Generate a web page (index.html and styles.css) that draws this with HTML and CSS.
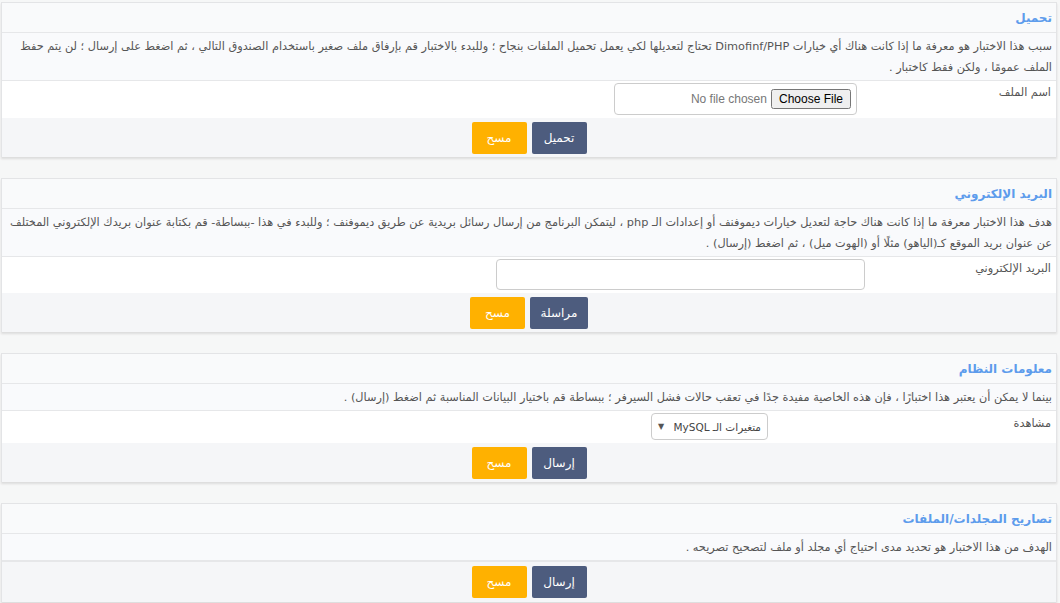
FILE: index.html
```html
<!DOCTYPE html>
<html lang="ar" dir="rtl">
    <head>
        <meta charset="utf-8">
        <title>اختبارات النظام</title>
        <link rel="stylesheet" href="styles.css">
    </head>

    <body>
        <div id="tests">
            <form class="panel">
                <div class="panel-title">تحميل</div>
                <div class="panel-desc">سبب هذا الاختبار هو معرفة ما إذا كانت هناك أي خيارات Dimofinf/PHP تحتاج لتعديلها لكي يعمل تحميل الملفات بنجاح ؛ وللبدء بالاختبار قم بإرفاق ملف صغير باستخدام الصندوق التالي ، ثم اضغط على إرسال ؛ لن يتم حفظ الملف عمومًا ، ولكن فقط كاختبار .</div>
                <div class="panel-row row-file">
                    <label class="row-label">اسم الملف</label>
                    <div class="file-box"><input type="file"></div>
                </div>
                <div class="panel-footer">
                    <button type="button" class="btn btn-primary">تحميل</button
                    ><button type="reset" class="btn btn-warn">مسح</button>
                </div>
            </form>

            <form class="panel">
                <div class="panel-title">البريد الإلكتروني</div>
                <div class="panel-desc">هدف هذا الاختبار معرفة ما إذا كانت هناك حاجة لتعديل خيارات ديموفنف أو إعدادات الـ php ، ليتمكن البرنامج من إرسال رسائل بريدية عن طريق ديموفنف ؛ وللبدء في هذا -ببساطة- قم بكتابة عنوان بريدك الإلكتروني المختلف عن عنوان بريد الموقع كـ(الياهو) مثلًا أو (الهوت ميل) ، ثم اضغط (إرسال) .</div>
                <div class="panel-row row-email">
                    <label class="row-label">البريد الإلكتروني</label>
                    <input type="text" class="text-input">
                </div>
                <div class="panel-footer">
                    <button type="button" class="btn btn-primary btn-wide">مراسلة</button
                    ><button type="reset" class="btn btn-warn">مسح</button>
                </div>
            </form>

            <form class="panel">
                <div class="panel-title">معلومات النظام</div>
                <div class="panel-desc">بينما لا يمكن أن يعتبر هذا اختبارًا ، فإن هذه الخاصية مفيدة جدًا في تعقب حالات فشل السيرفر ؛ ببساطة قم باختيار البيانات المناسبة ثم اضغط (إرسال) .</div>
                <div class="panel-row row-select">
                    <label class="row-label">مشاهدة</label>
                    <div class="select-box">
                        <span>متغيرات الـ MySQL</span>
                        <span class="caret">▼</span>
                    </div>
                </div>
                <div class="panel-footer">
                    <button type="button" class="btn btn-primary">إرسال</button
                    ><button type="reset" class="btn btn-warn">مسح</button>
                </div>
            </form>

            <form class="panel">
                <div class="panel-title">تصاريح المجلدات/الملفات</div>
                <div class="panel-desc">الهدف من هذا الاختبار هو تحديد مدى احتياج أي مجلد أو ملف لتصحيح تصريحه .</div>
                <div class="panel-footer footer-tall">
                    <button type="button" class="btn btn-primary">إرسال</button
                    ><button type="reset" class="btn btn-warn">مسح</button>
                </div>
            </form>
        </div>
    </body>
</html>
```

FILE: styles.css
```css
html, body {
    margin: 0;
    padding: 0;
    background-color: #f6f7f7;
}

body {
    font-family: "DejaVu Sans", sans-serif;
    font-size: 11.3px;
    color: #555;
}

#tests {
    padding-top: 2px;
}

.panel {
    display: block;
    margin: 0 3px 21px 1px;
    border: 1px solid #e3e4e6;
    border-bottom: none;
    box-shadow: 0 2px 2px #dcdcdc;
    background-color: #fff;
}

.panel-title {
    height: 29px;
    line-height: 30px;
    padding: 0 4px;
    font-size: 12px;
    font-weight: bold;
    color: #5d9cec;
    background-color: #f9fafb;
    border-bottom: 1px solid #e6e7e9;
}

.panel-desc {
    padding: 3px 4px 2px;
    line-height: 21px;
    background-color: #f9fafc;
    border-bottom: 1px solid #e6e7e9;
}

.panel-row {
    display: flex;
    align-items: flex-start;
    padding: 2px 4px 3px 0;
    background-color: #fff;
}

.row-label {
    padding: 3px 1px 0 0;
}

.row-file .row-label {
    width: 194px;
}

.row-email .row-label {
    width: 186px;
}

.row-select .row-label {
    width: 283px;
    padding-top: 4px;
}

.file-box {
    box-sizing: border-box;
    width: 243px;
    height: 32px;
    border: 1px solid #ccc;
    border-radius: 4px;
    padding: 5px 5px 0;
}

.file-box input {
    font-family: "Liberation Sans", sans-serif;
    font-size: 12px;
    color: #777;
}

.text-input {
    box-sizing: border-box;
    width: 369px;
    height: 31px;
    border: 1px solid #ccc;
    border-radius: 4px;
    outline: none;
}

.select-box {
    box-sizing: border-box;
    display: flex;
    align-items: center;
    justify-content: space-between;
    width: 117px;
    height: 27px;
    padding: 0 6px 0 6px;
    border: 1px solid #ccc;
    border-radius: 4px;
    color: #444;
    white-space: nowrap;
    font-size: 10.5px;
}

.caret {
    font-size: 8px;
    color: #555;
}

.panel-footer {
    display: flex;
    justify-content: center;
    gap: 5px;
    padding: 4px 0 3px;
    background-color: #f5f6f8;
    border-top: 1px solid #e6e7e9;
}

.panel-row + .panel-footer {
    border-top: none;
}

.footer-tall {
    padding: 4px 0 4px;
}

.btn {
    height: 32px;
    width: 55px;
    border: none;
    border-radius: 2px;
    font-family: "DejaVu Sans", sans-serif;
    font-size: 12px;
    color: #fff;
    cursor: pointer;
}

.btn-primary {
    background-color: #4d5c7e;
}

.btn-wide {
    width: 58px;
}

.btn-warn {
    background-color: #ffb100;
}
```
